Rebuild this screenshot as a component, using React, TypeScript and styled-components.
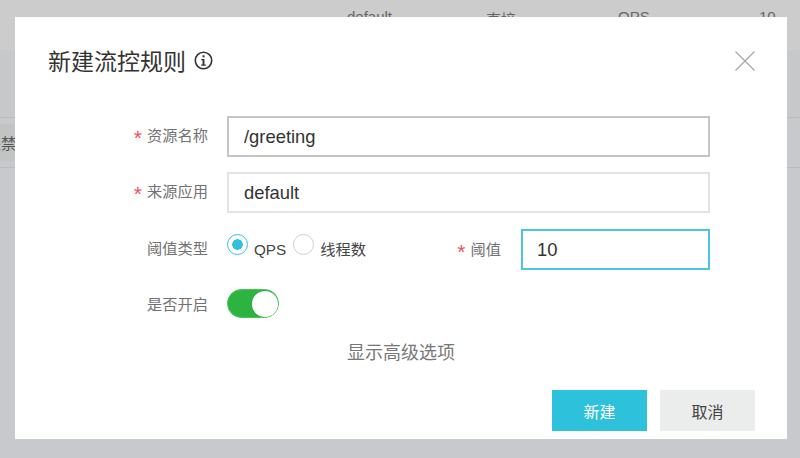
import React from "react";
import styled, { createGlobalStyle } from "styled-components";

const GlobalStyle = createGlobalStyle`
  html, body {
    margin: 0;
    padding: 0;
    background: #c8c9cc;
  }
  body {
    font-family: "Liberation Sans", "Noto Sans CJK SC", sans-serif;
  }
`;

export default function App() {
  return (
    <Page>
      <GlobalStyle />
      <Backdrop>
        <TopRow>
          <span>default</span>
          <span>直接</span>
          <span>QPS</span>
          <span>10</span>
        </TopRow>
        <MidRow />
        <ActionRow>
          <ActionLabel>关禁</ActionLabel>
        </ActionRow>
      </Backdrop>
      <Modal>
        <Header>
          <Title>新建流控规则</Title>
          <InfoIcon viewBox="0 0 18 18">
            <circle cx="9" cy="9" r="7.8" fill="none" stroke="#333" strokeWidth="1.5" />
            <rect x="8.1" y="4" width="1.9" height="2" fill="#333" />
            <path d="M6.8 7.6h3.1v5.2h1.3v1.1H6.8v-1.1h1.3V8.7H6.8z" fill="#333" />
          </InfoIcon>
          <CloseIcon viewBox="0 0 20 20">
            <path d="M.5.5l19 19M19.5.5l-19 19" stroke="#a6a6a6" strokeWidth="1.2" fill="none" />
          </CloseIcon>
        </Header>
        <Form>
          <Row>
            <Label $required>资源名称</Label>
            <Input $border="#c4c6c6" value="/greeting" readOnly />
          </Row>
          <Row>
            <Label $required>来源应用</Label>
            <Input $border="#e2e3e3" value="default" readOnly />
          </Row>
          <ThresholdRow>
            <Label>阈值类型</Label>
            <RadioGroup>
              <RadioItem>
                <Radio $checked />
                <RadioText>QPS</RadioText>
              </RadioItem>
              <RadioItem>
                <Radio />
                <RadioText>线程数</RadioText>
              </RadioItem>
            </RadioGroup>
            <ThresholdLabel $required>阈值</ThresholdLabel>
            <ThresholdInput $border="#4cc5df" value="10" readOnly />
          </ThresholdRow>
          <SwitchRow>
            <Label>是否开启</Label>
            <Switch>
              <Knob />
            </Switch>
          </SwitchRow>
        </Form>
        <Advanced>显示高级选项</Advanced>
        <Footer>
          <PrimaryButton>新建</PrimaryButton>
          <CancelButton>取消</CancelButton>
        </Footer>
      </Modal>
    </Page>
  );
}

const Page = styled.div`
  position: relative;
  width: 800px;
  height: 458px;
  overflow: hidden;
  background: #c8c9cc;
`;

const Backdrop = styled.div`
  display: flex;
  flex-direction: column;
`;

const TopRow = styled.div`
  height: 50px;
  box-sizing: border-box;
  padding: 8px 0 0 347px;
  display: grid;
  grid-template-columns: 139px 132px 141px auto;
  background: #cccccc;
  color: #666;
  font-size: 15px;
`;

const MidRow = styled.div`
  height: 67px;
  background: #c6c8c9;
  border-bottom: 1px solid #b9babc;
`;

const ActionRow = styled.div`
  height: 49px;
  border-bottom: 1px solid #b9babc;
  display: flex;
  align-items: center;
`;

const ActionLabel = styled.span`
  margin-left: -14px;
  padding: 8px 0;
  font-size: 15px;
  color: #555;
  background: #c2c3c3;
`;

const Modal = styled.div`
  position: absolute;
  left: 15px;
  top: 17px;
  width: 772px;
  height: 422px;
  box-sizing: border-box;
  background: #fff;
  padding: 0 32px;
  display: flex;
  flex-direction: column;
`;

const Header = styled.div`
  display: flex;
  align-items: center;
  height: 86px;
  padding-bottom: 4px;
`;

const Title = styled.h2`
  margin: 0 0 0 1px;
  font-size: 23px;
  font-weight: 400;
  color: #333;
`;

const InfoIcon = styled.svg`
  width: 19px;
  height: 19px;
  margin-left: 8px;
`;

const CloseIcon = styled.svg`
  width: 20px;
  height: 20px;
  margin-left: auto;
  margin-top: 2px;
`;

const Form = styled.div`
  display: flex;
  flex-direction: column;
  gap: 15px;
  margin-top: 9px;
`;

const Row = styled.div`
  display: flex;
  align-items: center;
  height: 41px;
`;

const ThresholdRow = styled(Row)`
  margin-top: 1px;
`;

const SwitchRow = styled(Row)`
  height: 29px;
  margin-top: 4px;
`;

const Label = styled.label<{ $required?: boolean }>`
  width: 130px;
  margin: 0 19px 2px 31px;
  text-align: right;
  font-size: 15.25px;
  line-height: 20px;
  color: #727272;
  ${SwitchRow} & {
    margin-bottom: -3px;
  }
  ${(p) =>
    p.$required &&
    `&::before {
      content: "*";
      margin-right: 5px;
      color: #f0535b;
      font-size: 21px;
      line-height: 0;
      vertical-align: -4px;
    }`}
`;

const Input = styled.input<{ $border: string }>`
  box-sizing: border-box;
  flex: 1;
  width: 483px;
  height: 41px;
  margin-right: 45px;
  padding: 0 14px 0 15px;
  border: 2px solid ${(p) => p.$border};
  outline: none;
  font: 18.4px "Liberation Sans", sans-serif;
  color: #333;
`;

const RadioGroup = styled.div`
  display: flex;
  width: 184px;
  gap: 7px;
`;

const RadioItem = styled.div`
  display: flex;
  align-items: center;
  gap: 6px;
`;

const Radio = styled.span<{ $checked?: boolean }>`
  box-sizing: border-box;
  width: 21px;
  height: 21px;
  margin-top: -10px;
  border-radius: 50%;
  border: 1.5px solid ${(p) => (p.$checked ? "#2fc0dc" : "#cfcfcf")};
  background: ${(p) =>
    p.$checked ? "radial-gradient(circle, #2fc0dc 0 5px, #fff 5.5px)" : "#fff"};
`;

const RadioText = styled.span`
  font-size: 15.25px;
  line-height: 20px;
  color: #444;
`;

const ThresholdLabel = styled(Label)`
  width: 90px;
  margin: 0 20px 0 0;
`;

const ThresholdInput = styled(Input)`
  flex: none;
  width: 189px;
  margin-right: 0;
  padding-left: 14px;
`;

const Switch = styled.div`
  box-sizing: border-box;
  width: 52px;
  height: 29px;
  border-radius: 15px;
  background: #2db33f;
  border: 1px solid #47c35a;
  display: flex;
  justify-content: flex-end;
  align-items: center;
`;

const Knob = styled.span`
  width: 26px;
  height: 26px;
  border-radius: 50%;
  background: #fff;
`;

const Advanced = styled.div`
  text-align: center;
  margin-top: 20px;
  font-size: 18px;
  color: #777;
`;

const Footer = styled.div`
  display: flex;
  justify-content: flex-end;
  gap: 13px;
  margin-top: auto;
  margin-bottom: 8px;
`;

const PrimaryButton = styled.button`
  width: 95px;
  height: 41px;
  border: none;
  background: #2ec1dc;
  color: #fff;
  font: 16px "Liberation Sans", "Noto Sans CJK SC", sans-serif;
`;

const CancelButton = styled(PrimaryButton)`
  background: #ebecec;
  color: #444;
`;
